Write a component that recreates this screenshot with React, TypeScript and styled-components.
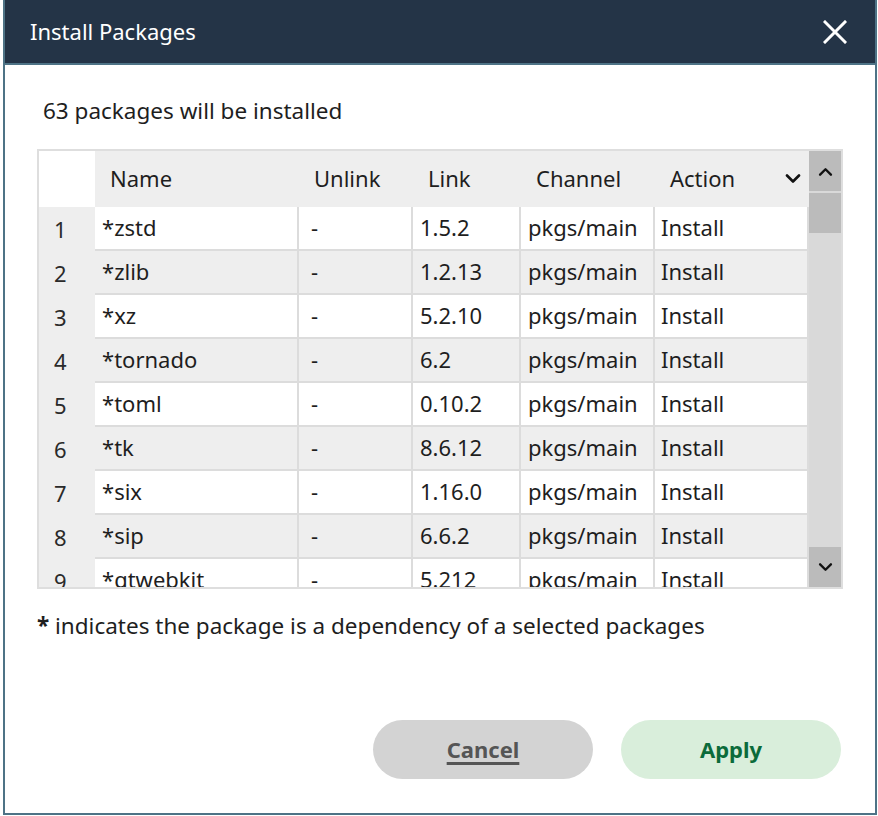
import React from "react";
import styled, { createGlobalStyle } from "styled-components";

const FONT = `"Noto Sans", "Open Sans", sans-serif`;

const Global = createGlobalStyle`
  html, body { margin: 0; padding: 0; background: #ffffff; }
  body { font-family: ${FONT}; color: #1e1e1e; }
`;

const Dialog = styled.div`
  box-sizing: border-box;
  margin-left: 3px;
  width: 874px;
  height: 815px;
  border: 2px solid #4e7386;
  border-top: none;
  display: flex;
  flex-direction: column;
  background: #ffffff;
`;

const TitleBar = styled.header`
  height: 63px;
  flex: none;
  background: #243447;
  border-bottom: 2px solid #4e7386;
  display: flex;
  align-items: center;
  justify-content: space-between;
  padding: 0 28px 0 25px;
`;

const Title = styled.h1`
  margin: 0 0 1px;
  font-size: 22px;
  font-weight: 400;
  color: #ffffff;
  line-height: 1;
`;

const CloseButton = styled.button`
  border: none;
  background: none;
  padding: 0;
  width: 24px;
  height: 24px;
  display: flex;
  cursor: pointer;
`;

const Body = styled.main`
  flex: 1;
  display: flex;
  flex-direction: column;
  padding: 31px 34px 34px 32px;
`;

const Summary = styled.p`
  margin: 0 0 0 6px;
  font-size: 22.5px;
  line-height: 30px;
`;

const TableFrame = styled.div`
  margin-top: 23px;
  width: 806px;
  height: 440px;
  box-sizing: border-box;
  border: 2px solid #dedede;
  display: flex;
`;

const Viewport = styled.div`
  width: 770px;
  height: 436px;
  overflow: hidden;
`;

const COLS = "56px 204px 114px 108px 134px 154px";

const HeaderRow = styled.div`
  display: grid;
  grid-template-columns: ${COLS};
  height: 56px;
  background: #eeeeee;
`;

const Corner = styled.div`
  background: #ffffff;
`;

const HeadCell = styled.div`
  display: flex;
  align-items: center;
  padding: 0 0 2px 15px;
  font-size: 22px;
  position: relative;
`;

const SortIcon = styled.svg`
  position: absolute;
  right: 8px;
  top: 23px;
`;

const Row = styled.div<{ $alt: boolean }>`
  display: grid;
  grid-template-columns: ${COLS};
  height: 44px;
  background: ${(p) => (p.$alt ? "#eeeeee" : "#ffffff")};
`;

const RowNum = styled.div`
  background: #eeeeee;
  display: flex;
  align-items: center;
  padding: 0 0 0 15px;
  font-size: 22px;
  color: #2a2a2a;
`;

const Cell = styled.div<{ $indent?: number }>`
  box-sizing: border-box;
  border-right: 2px solid #dcdcdc;
  border-bottom: 2px solid #dcdcdc;
  display: flex;
  align-items: center;
  padding: 0 0 3px ${(p) => p.$indent ?? 7}px;
  font-size: 22px;
  white-space: nowrap;
`;

const ScrollBar = styled.div`
  width: 32px;
  height: 436px;
  background: #d9d9d9;
  display: flex;
  flex-direction: column;
`;

const ScrollButton = styled.div`
  height: 40px;
  background: #bbbbbb;
  display: flex;
  align-items: center;
  justify-content: center;
`;

const Thumb = styled.div`
  height: 40px;
  margin-top: 2px;
  background: #bbbbbb;
`;

const Spacer = styled.div`
  flex: 1;
`;

const Note = styled.p`
  margin: 22px 0 0 0;
  font-size: 22.5px;
  line-height: 30px;
`;

const Star = styled.b`
  font-weight: 700;
`;

const Actions = styled.div`
  margin-top: auto;
  display: flex;
  justify-content: flex-end;
  gap: 28px;
`;

const Button = styled.button<{ $primary?: boolean }>`
  width: 220px;
  height: 59px;
  border: none;
  border-radius: 30px;
  padding: 0 0 2px;
  font-family: ${FONT};
  font-size: 22px;
  font-weight: 700;
  cursor: pointer;
  background: ${(p) => (p.$primary ? "#d9eedb" : "#d3d3d3")};
  color: ${(p) => (p.$primary ? "#0b6b3a" : "#555555")};
  text-decoration: ${(p) => (p.$primary ? "none" : "underline")};
  text-underline-offset: 4px;
  text-decoration-thickness: 3px;
`;

const Chevron = ({ up = false, size = 16 }: { up?: boolean; size?: number }) => (
  <svg width={size} height={size * 0.6} viewBox="0 0 16 10" fill="none">
    <path
      d={up ? "M2 8.5 L8 2.5 L14 8.5" : "M2 1.5 L8 7.5 L14 1.5"}
      stroke="#111"
      strokeWidth="2.6"
      strokeLinecap="round"
      strokeLinejoin="round"
    />
  </svg>
);

const packages = [
  ["zstd", "1.5.2"],
  ["zlib", "1.2.13"],
  ["xz", "5.2.10"],
  ["tornado", "6.2"],
  ["toml", "0.10.2"],
  ["tk", "8.6.12"],
  ["six", "1.16.0"],
  ["sip", "6.6.2"],
  ["qtwebkit", "5.212"],
];

export default function App() {
  return (
    <>
      <Global />
      <Dialog>
        <TitleBar>
          <Title>Install Packages</Title>
          <CloseButton aria-label="Close">
            <svg width="24" height="24" viewBox="0 0 24 24">
              <path d="M2 2 L22 22 M22 2 L2 22" stroke="#fff" strokeWidth="3" strokeLinecap="square" />
            </svg>
          </CloseButton>
        </TitleBar>
        <Body>
          <Summary>63 packages will be installed</Summary>
          <TableFrame>
            <Viewport>
              <HeaderRow>
                <Corner />
                <HeadCell>Name</HeadCell>
                <HeadCell>Unlink</HeadCell>
                <HeadCell>Link</HeadCell>
                <HeadCell>Channel</HeadCell>
                <HeadCell>
                  Action
                  <SortIcon width="16" height="10" viewBox="0 0 16 10" fill="none">
                    <path d="M2 1.5 L8 7.5 L14 1.5" stroke="#111" strokeWidth="2.6" strokeLinecap="round" strokeLinejoin="round" />
                  </SortIcon>
                </HeadCell>
              </HeaderRow>
              {packages.map(([name, ver], i) => (
                <Row key={name} $alt={i % 2 === 1}>
                  <RowNum>{i + 1}</RowNum>
                  <Cell>*{name}</Cell>
                  <Cell $indent={12}>-</Cell>
                  <Cell>{ver}</Cell>
                  <Cell>pkgs/main</Cell>
                  <Cell $indent={6}>Install</Cell>
                </Row>
              ))}
            </Viewport>
            <ScrollBar>
              <ScrollButton>
                <Chevron up size={15} />
              </ScrollButton>
              <Thumb />
              <Spacer />
              <ScrollButton>
                <Chevron size={15} />
              </ScrollButton>
            </ScrollBar>
          </TableFrame>
          <Note>
            <Star>*</Star> indicates the package is a dependency of a selected packages
          </Note>
          <Actions>
            <Button>Cancel</Button>
            <Button $primary>Apply</Button>
          </Actions>
        </Body>
      </Dialog>
    </>
  );
}
